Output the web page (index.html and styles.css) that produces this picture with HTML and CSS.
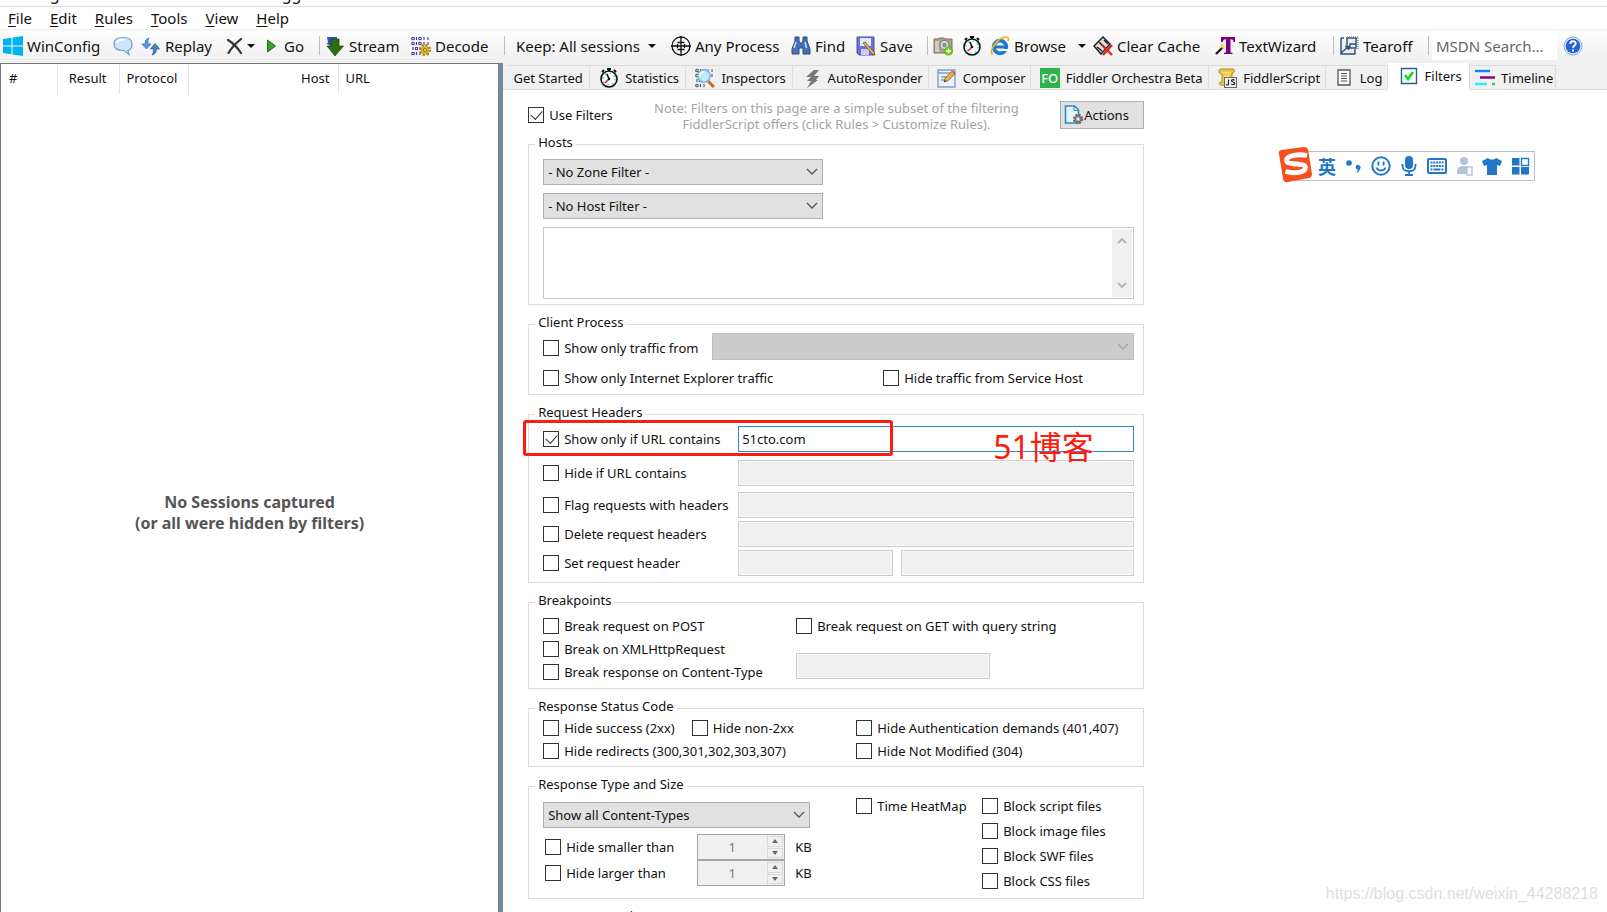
FILE: index.html
```html
<!DOCTYPE html>
<html lang="en">
<head>
<meta charset="utf-8">
<title>Progress Telerik Fiddler Web Debugger</title>
<link rel="stylesheet" href="styles.css">
</head>
<body>
<svg class="defs" aria-hidden="true">
  <symbol id="stopwatch" viewBox="0 0 20 20">
    <path d="M8 1h4M10 1v2M3 4l2-2M17 4l-2-2" stroke="#111" stroke-width="2" fill="none"/>
    <circle cx="10" cy="11" r="8" fill="#fff" stroke="#111" stroke-width="1.6"/>
    <circle cx="10" cy="11" r="6" fill="none" stroke="#3fd6e6" stroke-width="1.6" stroke-dasharray="1.6 3.1"/>
    <path d="M10 11L8 6" stroke="#111" stroke-width="1.6"/><path d="M10 11l-4 4" stroke="#e2231a" stroke-width="1.6"/>
    <circle cx="10" cy="11" r="1.3" fill="#111"/>
  </symbol>
  <symbol id="bits" viewBox="0 0 20 20">
    <g fill="none" stroke-width="1.1"><circle cx="2" cy="2.500" r="1.300"/><path d="M5.500 1v3M13 1v3"/><circle cx="9" cy="2.500" r="1.300"/><path d="M17 1v3"/>
    <circle cx="2" cy="7.500" r="1.300"/><path d="M5.500 6v3M13 6v3"/><circle cx="9" cy="7.500" r="1.300"/><path d="M17 6v3"/>
    <path d="M2 11v3"/><circle cx="5.500" cy="12.500" r="1.300"/><path d="M9 11v3"/>
    <circle cx="2" cy="17.500" r="1.300"/><path d="M5.500 16v3M9 16v3M17 16v3"/></g>
  </symbol>
  <symbol id="pencil" viewBox="0 0 12 12">
    <path d="M1 11l1-3.500L8.500 1 11 3.500 4.500 10z" fill="#e9b53c" stroke="#8a5a2a" stroke-width=".8"/><path d="M8 1.500L9.200.5l2.300 2.300-1 1.200z" fill="#d9574a"/><path d="M1 11l.6-2 1.400 1.400z" fill="#333"/>
  </symbol>
</svg>

<header class="titlebar">Progress Telerik Fiddler Web Debugger</header>
<nav class="menubar" aria-label="Main menu">
  <button><u>F</u>ile</button><button><u>E</u>dit</button><button><u>R</u>ules</button><button><u>T</u>ools</button><button><u>V</u>iew</button><button><u>H</u>elp</button>
</nav>

<div class="toolbar" role="toolbar" aria-label="Toolbar">
  <button><svg class="icon" viewBox="0 0 20 20"><path fill="#00b3f0" d="M0 3l8.500-1.300v7.800H0zM9.500 1.500L20 0v9.500H9.500zM0 10.500h8.500v7.800L0 17zM9.500 10.500H20V20L9.500 18.500z"/></svg>WinConfig</button>
  <button aria-label="Comment"><svg class="icon" viewBox="0 0 20 20"><path d="M10 1.500c5.500 0 9 2 9 6.500 0 4-1.500 6-4 6.500l1 4-5-4C4 14.500 1 12.500 1 8s3.500-6.500 9-6.500z" fill="#cfe6fa" stroke="#6d9ed2" stroke-width="1.200"/><path d="M4 7c.5-3 3-3.500 7-3.500" stroke="#fff" stroke-width="2" fill="none"/></svg></button>
  <button><svg class="icon" viewBox="0 0 20 20"><path d="M8 2C4.500 3 4 5 4.300 8H1l4.500 5L10 8H7c-.2-3 0-4 1-6z" fill="#5b9ae0" stroke="#2a6cb8" stroke-width=".7"/><path d="M11 19c3.500-1 4.500-3 4.200-6H18.500L14 7.500 9.500 13h3c.2 3-.5 4-1.500 6z" fill="#4a83c8" stroke="#1f5799" stroke-width=".7"/></svg>Replay</button>
  <button aria-label="Remove"><svg class="icon icon-s" viewBox="0 0 16 16"><path d="M1 2c5 3 9 7 13 13M14 1C9 5 5 9 1.500 15" stroke="#333" stroke-width="2.200" fill="none" stroke-linecap="round"/></svg><i class="caret"></i></button>
  <button><svg class="icon icon-go" viewBox="0 0 14 16"><path d="M1.500 2l8 6-8 6z" fill="#37a02f" stroke="#1d6f1b"/></svg>Go</button>
  <span class="sep"></span>
  <button><svg class="icon" viewBox="0 0 20 20"><path d="M2 1h10v7l-4 4-7-5h2z" fill="#2a55cf"/><path d="M6 3h8v7h4.500L10 20 2 10h4z" fill="#2f6b13" stroke="#1b4a0a" stroke-width=".7"/></svg>Stream</button>
  <button><svg class="icon" viewBox="0 0 20 20"><use href="#bits" stroke="#3a3aa0"/><circle cx="14" cy="14" r="4.600" fill="#d8b42a"/><circle cx="14" cy="14" r="5" fill="none" stroke="#a8820f" stroke-width="2.200" stroke-dasharray="2 1.920"/><circle cx="14" cy="14" r="1.500" fill="#fff3b0" stroke="#8a6a08"/></svg>Decode</button>
  <span class="sep"></span>
  <button>Keep: All sessions<i class="caret caret-keep"></i></button>
  <button><svg class="icon" viewBox="0 0 20 20"><g fill="none" stroke="#111" stroke-width="1.300"><circle cx="10" cy="10" r="9"/><path d="M10 0v20M0 10h20M6.500 6.500h7M6.500 13.500h7M6.500 8v4M13.500 8v4"/></g></svg>Any Process</button>
  <button><svg class="icon" viewBox="0 0 20 20"><path d="M4 1h4v4l1 2h2l1-2V1h4v4l3 8v5h-7v-6H8v6H1v-5l3-8z" fill="#4a6fb5" stroke="#294a86"/><path d="M5 6l-2 6M14 6l1.500 6" stroke="#cfdff5" stroke-width="1.500"/></svg>Find</button>
  <button><svg class="icon" viewBox="0 0 20 20"><path d="M1 1h17v18H3l-2-2z" fill="#6a72d8" stroke="#4a4fae"/><path d="M4 2h11v8H4z" fill="#e4ecfb"/><path d="M5 13h8v6H5z" fill="#c9cdf0"/><path d="M7 7l2-1 9 10 1 3-3-1z" fill="#e5b653" stroke="#6b4b1d" stroke-width=".8"/></svg>Save</button>
  <span class="sep"></span>
  <button aria-label="Screenshot"><svg class="icon" viewBox="0 0 20 20"><path d="M1 3h4l1-1h5l1 1h7v14H1z" fill="#aaa08c" stroke="#7c745f"/><path d="M2 5h4v11H2z" fill="#d2cbb9"/><circle cx="11.500" cy="9" r="4.500" fill="#ddd" stroke="#777"/><circle cx="11.500" cy="9" r="2.200" fill="#7f8ea6"/><circle cx="15.500" cy="15" r="4.500" fill="#6cbf1d"/><path d="M15.500 12.500v5M13 15h5" stroke="#fff" stroke-width="1.500"/></svg></button>
  <button aria-label="Timer"><svg class="icon"><use href="#stopwatch"/></svg></button>
  <button><svg class="icon" viewBox="0 0 20 20"><circle cx="10" cy="11" r="6.300" fill="none" stroke="#1d79d0" stroke-width="3.800"/><path d="M5 11h13" stroke="#1d79d0" stroke-width="3"/><path d="M12 13h7v2h-7z" fill="#fbfbfb"/><path d="M2.500 18.500C-1 15 7 2 15.500 1.200c3-.2 3.500 2 2.500 4" fill="none" stroke="#f0b429" stroke-width="1.800"/></svg>Browse<i class="caret caret-browse"></i></button>
  <button><svg class="icon" viewBox="0 0 20 20"><path d="M1 10L10 1l7 7-9 10z" fill="#ddd" stroke="#222" stroke-width="1.500"/><path d="M6 6l6 6M4 11l5 4M11 4l4 4" stroke="#222" stroke-width="1.600"/><path d="M9 9l10 10M19 9L10 19" stroke="#d8281c" stroke-width="2.400"/></svg>Clear Cache</button>
  <button><svg class="icon" viewBox="0 0 20 20"><path d="M6 1h14v5h-1.500c0-2-1-2.800-3-2.800V15c0 1.500.5 1.800 2 1.800V18H9v-1.200c1.500 0 2-.3 2-1.800V3.200c-2 0-3 .8-3.200 2.800H6z" fill="#800080"/><path d="M1 18l7-7" stroke="#222" stroke-width="2.400"/><path d="M6 9l3 3" stroke="#f3e135" stroke-width="3"/></svg>TextWizard</button>
  <span class="sep"></span>
  <button><svg class="icon" viewBox="0 0 20 20"><g fill="none" stroke="#38536f" stroke-width="1.500"><path d="M2 2v16h14v-5M2 2h3M8 2h9v10H8z" fill="#e8eef6"/><path d="M8 1h11v12" stroke-dasharray="1 1" stroke="#7d8ea0"/><path d="M2 17l7-6M6 10.500h3.500V14M11 12V8h6"/></g></svg>Tearoff</button>
  <span class="sep"></span>
  <input class="search" type="text" placeholder="MSDN Search..." aria-label="MSDN Search">
  <button aria-label="Help"><svg class="icon" viewBox="0 0 20 20"><circle cx="10" cy="10" r="9" fill="#dce9fb" stroke="#8aa9da"/><circle cx="10" cy="10" r="7.300" fill="#2a62cf"/><path d="M7.300 8c0-3.600 5.400-3.500 5.400-.4 0 2-2.700 2-2.700 4.200M10 13.500v2" stroke="#fff" stroke-width="1.900" fill="none"/></svg></button>
</div>

<main class="workspace">
  <section class="sessions" aria-label="Sessions">
    <table class="session-list">
      <thead><tr><th class="c-num">#</th><th class="c-result">Result</th><th class="c-protocol">Protocol</th><th class="c-host">Host</th><th class="c-url">URL</th></tr></thead>
    </table>
    <p class="empty">No Sessions captured<br>(or all were hidden by filters)</p>
  </section>

  <section class="detail">
    <div class="tabs" role="tablist">
      <button role="tab">Get Started</button>
      <button role="tab"><svg class="icon"><use href="#stopwatch"/></svg>Statistics</button>
      <button role="tab"><svg class="icon" viewBox="0 0 20 20"><use href="#bits" stroke="#555"/><path d="M13 13l6 6" stroke="#c46f23" stroke-width="3"/><circle cx="9" cy="8" r="6.200" fill="#bfe6fb" stroke="#7cb6dd" stroke-width="1.500"/><path d="M5 8c0-3 2-4 4-4" stroke="#fff" stroke-width="1.800" fill="none"/></svg>Inspectors</button>
      <button role="tab"><svg class="icon" viewBox="0 0 20 20"><path d="M12 2h5l-5 6h5l-3 4h2L5 20l4-7H5l4-4H4z" fill="#777"/></svg>AutoResponder</button>
      <button role="tab"><svg class="icon" viewBox="0 0 20 20"><path d="M1 2h17v17H1z" fill="#eaf2fb" stroke="#7da0c8" stroke-width="1.400"/><path d="M1 5h17M4 9h6M4 12h4" stroke="#7da0c8" stroke-width="1.400"/><use href="#pencil" x="6" y="2" width="13" height="13"/></svg>Composer</button>
      <button role="tab"><span class="fo" aria-hidden="true">FO</span>Fiddler Orchestra Beta</button>
      <button role="tab"><svg class="icon" viewBox="0 0 20 20"><path d="M4 1h12c2 0 2 4-1 4v6H8v5c-1 2-5 2-6-1l3-1V6C1 6 1 1 4 1z" fill="#e9c648" stroke="#b08c1c"/><path d="M5 5h9M7 8h6" stroke="#fff1a8"/><rect x="7.500" y="9.500" width="12" height="10" fill="#f4f4f4" stroke="#666"/><path d="M11.500 11.500v4.500c0 1.300-2 1.300-2.200 0M17.500 12.500c-.5-1.200-3-1-3 .3 0 1.600 3.200.8 3.200 2.600 0 1.500-3 1.500-3.400.2" fill="none" stroke="#222" stroke-width="1.200"/></svg>FiddlerScript</button>
      <button role="tab"><svg class="icon" viewBox="0 0 20 20"><path d="M4 2h12v15H4z" fill="#fafafa" stroke="#555" stroke-width="1.300"/><path d="M7 5.500h6M7 8h6M7 10.500h6M7 13h6" stroke="#555"/></svg>Log</button>
      <button role="tab" class="active" aria-selected="true"><svg class="icon" viewBox="0 0 20 20"><path d="M2.500 2.500h15v15h-15z" fill="#fff" stroke="#2c5b82" stroke-width="1.400"/><path d="M6 9l3 4 5-7" fill="none" stroke="#0be312" stroke-width="2.600"/></svg>Filters</button>
      <button role="tab"><svg class="icon" viewBox="0 0 20 20"><path d="M0 3h15" stroke="#0a84ff" stroke-width="2.400"/><path d="M5 9.500h15" stroke="#800080" stroke-width="2.400"/><path d="M0 16h12" stroke="#1cf0f0" stroke-width="2.400"/><path d="M17 16h3" stroke="#19e01f" stroke-width="2.400"/></svg>Timeline</button>
    </div>

    <form class="filters">
      <div class="intro">
        <label class="check"><input type="checkbox" checked>Use Filters</label>
        <p class="note">Note: Filters on this page are a simple subset of the filtering<br>FiddlerScript offers (click Rules &gt; Customize Rules).</p>
        <button type="button" class="actions"><svg class="icon" viewBox="0 0 20 20"><path d="M1.500 1h9l4 4v13h-13z" fill="#e6f4fc" stroke="#2a8cc4" stroke-width="1.600"/><path d="M10 1v4.500h4.500" fill="none" stroke="#2a8cc4"/><circle cx="14" cy="14" r="4" fill="#bbb" stroke="#666" stroke-width="2.400" stroke-dasharray="2 1.140"/><circle cx="14" cy="14" r="3" fill="#aaa" stroke="#666"/><circle cx="14" cy="14" r="1.200" fill="#eee"/></svg>Actions</button>
      </div>

      <fieldset class="hosts">
        <legend>Hosts</legend>
        <select aria-label="Zone filter"><option>- No Zone Filter -</option></select>
        <select aria-label="Host filter"><option>- No Host Filter -</option></select>
        <div class="hostbox"><textarea aria-label="Hosts"></textarea>
          <div class="scroll" aria-hidden="true"><svg viewBox="0 0 10 6"><path d="M1 5l4-4 4 4"/></svg><svg viewBox="0 0 10 6"><path d="M1 1l4 4 4-4"/></svg></div></div>
      </fieldset>

      <fieldset class="client">
        <legend>Client Process</legend>
        <div class="process"><label class="check"><input type="checkbox">Show only traffic from</label><select disabled aria-label="Process"></select></div>
        <div class="pair"><label class="check"><input type="checkbox">Show only Internet Explorer traffic</label><label class="check"><input type="checkbox">Hide traffic from Service Host</label></div>
      </fieldset>

      <fieldset class="request">
        <legend>Request Headers</legend>
        <div class="field roomy"><label class="check"><input type="checkbox" checked>Show only if URL contains</label><input class="text focus" type="text" value="51cto.com" aria-label="Show if URL contains"></div>
        <div class="field roomy"><label class="check"><input type="checkbox">Hide if URL contains</label><input class="text" type="text" disabled aria-label="Hide if URL contains"></div>
        <div class="field"><label class="check"><input type="checkbox">Flag requests with headers</label><input class="text" type="text" disabled aria-label="Flag headers"></div>
        <div class="field"><label class="check"><input type="checkbox">Delete request headers</label><input class="text" type="text" disabled aria-label="Delete headers"></div>
        <div class="field split"><label class="check"><input type="checkbox">Set request header</label><input class="text" type="text" disabled aria-label="Header name"><input class="text" type="text" disabled aria-label="Header value"></div>
        <span class="mark-box"></span>
        <span class="mark-text" lang="zh">51博客</span>
      </fieldset>

      <fieldset class="breakpoints">
        <legend>Breakpoints</legend>
        <div class="stack"><label class="check"><input type="checkbox">Break request on POST</label><label class="check"><input type="checkbox">Break on XMLHttpRequest</label><label class="check"><input type="checkbox">Break response on Content-Type</label></div>
        <div class="stack spread"><label class="check"><input type="checkbox">Break request on GET with query string</label><input class="text" type="text" disabled aria-label="Content type"></div>
      </fieldset>

      <fieldset class="status">
        <legend>Response Status Code</legend>
        <div class="stack"><div class="twins"><label class="check"><input type="checkbox">Hide success (2xx)</label><label class="check"><input type="checkbox">Hide non-2xx</label></div><label class="check"><input type="checkbox">Hide redirects (300,301,302,303,307)</label></div>
        <div class="stack"><label class="check"><input type="checkbox">Hide Authentication demands (401,407)</label><label class="check"><input type="checkbox">Hide Not Modified (304)</label></div>
      </fieldset>

      <fieldset class="types">
        <legend>Response Type and Size</legend>
        <div class="sizes">
          <select aria-label="Content types"><option>Show all Content-Types</option></select>
          <div class="size"><label class="check"><input type="checkbox">Hide smaller than</label><span class="spin"><input type="text" value="1" disabled aria-label="Smaller than, KB"><span class="steps"><button type="button" disabled aria-label="Up"><i class="up"></i></button><button type="button" disabled aria-label="Down"><i class="down"></i></button></span></span><span>KB</span></div>
          <div class="size"><label class="check"><input type="checkbox">Hide larger than</label><span class="spin"><input type="text" value="1" disabled aria-label="Larger than, KB"><span class="steps"><button type="button" disabled aria-label="Up"><i class="up"></i></button><button type="button" disabled aria-label="Down"><i class="down"></i></button></span></span><span>KB</span></div>
        </div>
        <label class="check"><input type="checkbox">Time HeatMap</label>
        <div class="blocks"><label class="check"><input type="checkbox">Block script files</label><label class="check"><input type="checkbox">Block image files</label><label class="check"><input type="checkbox">Block SWF files</label><label class="check"><input type="checkbox">Block CSS files</label></div>
      </fieldset>

      <fieldset class="response">
        <legend>Response Headers</legend>
      </fieldset>
    </form>
  </section>
</main>

<div class="ime">
  <svg class="ime-logo" viewBox="0 0 36 36"><path d="M2 7q-1-3 2-4L27 0q3 0 4 2l4 25q0 3-3 4L11 35q-4 1-5-3z" fill="#f4511e"/><path d="M30 8.500C20 6.500 9 9 9.500 13.500c.5 5.500 19 1.500 19 7 0 5-11 6.500-20 4" fill="none" stroke="#fff" stroke-width="4.800"/></svg>
  <span class="ime-lang" lang="zh">英</span>
  <svg viewBox="0 0 20 20"><circle cx="5" cy="7" r="2.800"/><path d="M12 10a2.500 2.500 0 1 1 4 3c-.5 2-2 3.500-3.500 4 .8-1.500 1.300-2.500 1.200-3.600a2.500 2.500 0 0 1-1.700-3.400z"/></svg>
  <svg viewBox="0 0 20 20"><circle cx="10" cy="10" r="8.700" fill="none" stroke="#2176c9" stroke-width="2"/><path d="M6.500 5.500h1.800v4H6.500zM11.700 5.500h1.800v4h-1.800z"/><path d="M5.500 11.500c1.500 4 7.500 4 9 0" fill="none" stroke="#2176c9" stroke-width="1.800"/></svg>
  <svg viewBox="0 0 20 20"><rect x="6" y="0" width="8" height="13" rx="4"/><path d="M3.500 8v2c0 7 13 7 13 0V8M10 15v4M6 19h8" fill="none" stroke="#2176c9" stroke-width="1.800"/></svg>
  <svg viewBox="0 0 20 20"><path d="M2 3h16q1 0 1 1v12q0 1-1 1H2q-1 0-1-1V4q0-1 1-1z" fill="#fff" stroke="#2176c9" stroke-width="2"/><path d="M3.500 6.500h13M3.500 10h13" fill="none" stroke="#2176c9" stroke-width="2.200" stroke-dasharray="2 .8"/><path d="M3.500 13.500h2M6.500 13.500h7M14.500 13.500h2" stroke="#2176c9" stroke-width="2"/></svg>
  <svg class="muted" viewBox="0 0 20 20"><circle cx="9" cy="5" r="4"/><path d="M2 18c-1-7 3-8 7-8 3 0 5 0 6 3v5z"/><rect x="12" y="11" width="5" height="8" fill="#fff" stroke="#b4c3d9" stroke-width="1.400"/></svg>
  <svg viewBox="0 0 20 20"><path d="M6 2c2 2 6 2 8 0l6 3-2 5-3-1v10H5V9l-3 1-2-5z"/></svg>
  <svg viewBox="0 0 20 20"><rect x="2" y="2" width="7.500" height="7.500"/><rect x="11.500" y="2.500" width="7" height="7" fill="#fff" stroke="#2176c9" stroke-width="1.400"/><rect x="2" y="11" width="7.500" height="7.500"/><rect x="11" y="11" width="8" height="7.500"/></svg>
</div>
<span class="watermark">https://blog.csdn.net/weixin_44288218</span>
</body>
</html>
```
FILE: styles.css
```css
* { box-sizing: border-box; }
body {
  margin: 0;
  height: 100vh;
  display: flex;
  flex-direction: column;
  overflow: hidden;
  position: relative;
  background: #fff;
  color: #111;
  font: 13px/18px "Noto Sans", "Open Sans", sans-serif;
}
button, input, select, textarea { font: inherit; color: inherit; margin: 0; }
button { border: 0; padding: 0; background: none; white-space: nowrap; }
.defs { position: absolute; width: 0; height: 0; }
.icon { width: 20px; height: 20px; flex: none; }
.icon-s { width: 16px; height: 16px; }
.icon-go { width: 14px; height: 16px; }

.titlebar {
  flex: none;
  height: 7px;
  padding: 0 0 4px 24px;
  display: flex;
  align-items: flex-end;
  overflow: hidden;
  border-bottom: 1px solid #dcdcdc;
  font-size: 16px;
  line-height: 16px;
}
.menubar {
  flex: none;
  height: 22px;
  display: flex;
  align-items: center;
  gap: 18px;
  padding-left: 8px;
  font-size: 15px;
}
.menubar u { text-underline-offset: 2px; }

.toolbar {
  flex: none;
  height: 34px;
  display: grid;
  grid-template-columns: 110px 28px 86px 39px 53px 6px 86px 93px 12px 155px 120px 65px 71px 6px 29px 28px 103px 122px 118px 6px 89px 4px 131px auto;
  align-items: center;
  padding: 0 0 2px 3px;
  background: linear-gradient(#fdfdfd, #efefef);
  border-top: 1px solid #f0f0f0;
  font-size: 15px;
}
.toolbar button { display: flex; align-items: center; gap: 4px; }
.sep { width: 1px; height: 19px; background: #bdbdbd; }
.caret { border: 4px solid transparent; border-top-color: #111; border-bottom: 0; }
.caret-keep { margin-left: 4px; }
.caret-browse { margin-left: 8px; }
.search { width: 125px; height: 29px; border: 0; padding: 0 4px; background: #fff; }
.search::placeholder { color: #666; opacity: 1; }

.workspace { flex: 1; min-height: 0; display: flex; background: #fff; }
.sessions {
  width: 31%;
  flex: none;
  display: flex;
  flex-direction: column;
  border-top: 1px solid #777;
  border-left: 1px solid #777;
}
.session-list { width: 100%; table-layout: fixed; border-collapse: collapse; }
.session-list th {
  height: 30px;
  padding: 0 8px 2px;
  font-weight: 400;
  text-align: left;
  border-right: 1px solid #e3e3e3;
}
.session-list .c-num { width: 56px; }
.session-list .c-result { width: 62px; padding-right: 12px; text-align: right; }
.session-list .c-protocol { width: 69px; padding-left: 7px; }
.session-list .c-host { width: 150px; text-align: right; }
.session-list .c-url { border: 0; padding-left: 7px; }
.empty {
  flex: 1;
  display: grid;
  place-content: center;
  margin: 0;
  padding-top: 20px;
  text-align: center;
  color: #555;
  font-weight: 700;
  font-size: 16px;
  line-height: 21px;
}

.detail { flex: 1; min-width: 0; overflow: hidden; border-left: 5px solid #76879a; }
.tabs {
  height: 27px;
  padding: 2px 0 0 4px;
  display: grid;
  grid-template-columns: 83px 96px 107px 136px 102px 178px 117px 62px 82px 86px;
  background: #f0f0f0;
  border-bottom: 1px solid #dcdcdc;
}
.tabs button {
  display: flex;
  align-items: center;
  justify-content: center;
  gap: 6px;
  padding-left: 3px;
  border: 1px solid #dcdcdc;
  border-left: 0;
  border-bottom: 0;
}
.tabs button:first-child { padding-left: 0; }
.tabs .active { background: #fff; margin: -3px 0 -1px; padding-bottom: 1px; }
.fo { width: 20px; height: 20px; background: #2eb34a; color: #fff; line-height: 20px; font-weight: 500; }

.filters { padding: 10px 24px 0 25px; max-width: 665px; display: flex; flex-direction: column; gap: 10px; }
.intro { height: 35px; display: flex; justify-content: space-between; align-items: flex-start; margin-bottom: -10px; }
.intro .check { padding-top: 8px; height: 22px; }
.note { margin: 0; text-align: center; line-height: 16px; color: #a3a3a3; }
.actions {
  display: flex;
  align-items: center;
  height: 28px;
  width: 84px;
  margin-top: 1px;
  padding-left: 3px;
  background: #e1e1e1;
  border: 1px solid #adadad;
}

.check { display: flex; align-items: center; gap: 5px; height: 18px; white-space: nowrap; }
.check input {
  appearance: none;
  width: 16px;
  height: 16px;
  flex: none;
  display: grid;
  place-items: center;
  border: 1px solid #333;
  background: #fff;
}
.check input:checked::after {
  content: "";
  width: 6px;
  height: 10px;
  margin-bottom: 3px;
  border: solid #333;
  border-width: 0 1px 1px 0;
  transform: rotate(42deg);
}

fieldset { margin: 0; min-width: 0; border: 1px solid #dcdcdc; padding: 0 9px 0 14px; position: relative; }
legend { height: 18px; margin-left: -8px; padding: 0 3px; line-height: 15px; }
select {
  appearance: none;
  height: 26px;
  padding: 0 4px;
  border: 1px solid #adadad;
  border-radius: 0;
  background: #e1e1e1 url("data:image/svg+xml,%3Csvg xmlns='http://www.w3.org/2000/svg' width='12' height='8'%3E%3Cpath d='M1 1l5 5 5-5' fill='none' stroke='%23555' stroke-width='1.300'/%3E%3C/svg%3E") no-repeat right 4px center;
}
select:disabled {
  height: 27px;
  opacity: 1;
  border-color: #bfbfbf;
  background: #ccc url("data:image/svg+xml,%3Csvg xmlns='http://www.w3.org/2000/svg' width='12' height='8'%3E%3Cpath d='M1 1l5 5 5-5' fill='none' stroke='%23a5a5a5' stroke-width='1.300'/%3E%3C/svg%3E") no-repeat right 4px center;
}
.text { width: 100%; min-width: 0; height: 26px; padding: 0 3px; border: 1px solid #ccc; background: #fff; }
.text:disabled { background: #f0f0f0; box-shadow: inset 0 0 0 1px #f8f8f8; }
.text.focus { border-color: #2a8ad8; }

.hosts { padding-top: 6px; padding-bottom: 5px; }
.hosts select { display: block; width: 280px; margin-bottom: 8px; }
.hostbox { height: 72px; display: flex; padding: 1px; border: 1px solid #c8c8c8; }
.hostbox textarea { flex: 1; border: 0; padding: 2px; resize: none; }
.scroll { width: 20px; padding: 9px 5px; display: flex; flex-direction: column; justify-content: space-between; background: #f0f0f0; }
.scroll path { fill: none; stroke: #b5b5b5; stroke-width: 2; }

.client { padding-bottom: 7px; }
.process { display: flex; justify-content: space-between; margin-bottom: 9px; }
.process .check { margin-top: 6px; }
.process select { width: 422px; }
.pair { display: grid; grid-template-columns: 340px 1fr; }

.request { padding-top: 3px; padding-bottom: 6px; }
.field { display: grid; grid-template-columns: 195px 1fr; align-items: center; }
.field + .field { margin-top: 3px; }
.roomy + .field { margin-top: 6px; }
.roomy + .roomy { margin-top: 8px; }
.split { grid-template-columns: 195px 155px 1fr; }
.split .text:last-child { margin-left: 8px; width: auto; }
.mark-box { position: absolute; left: -6px; top: -3px; width: 370px; height: 36px; border: 3px solid #fb1d10; border-radius: 3px; pointer-events: none; }
.mark-text { position: absolute; left: 464px; top: 4px; color: #fb1d10; font: 32px/40px "Noto Sans", "Noto Sans CJK SC", sans-serif; }

.breakpoints { display: grid; grid-template-columns: 253px 1fr; padding-top: 6px; padding-bottom: 7px; }
.stack { display: flex; flex-direction: column; gap: 5px; }
.spread { gap: 18px; }
.spread .text { width: 194px; }

.status { display: grid; grid-template-columns: 313px 1fr; padding-top: 2px; padding-bottom: 6px; }
.twins { display: flex; gap: 17px; }

.types { display: grid; grid-template-columns: 313px 126px 1fr; padding-top: 2px; padding-bottom: 8px; }
.sizes { padding-top: 5px; }
.sizes select { width: 267px; display: block; margin-bottom: 6px; }
.size { display: grid; grid-template-columns: 152px 88px 1fr; align-items: center; padding-left: 2px; }
.size > span:last-child { padding-left: 10px; }
.spin { height: 26px; display: flex; border: 1px solid #a5a5a9; background: #f0f0f0; }
.spin input { flex: 1; min-width: 0; border: 0; padding: 0; text-align: center; background: none; color: #777; }
.steps { width: 18px; padding: 1px; display: grid; gap: 1px; }
.steps button { display: grid; place-items: center; border: 1px solid #d9d9d9; }
.up, .down { border: 3px solid transparent; }
.up { border-bottom: 4px solid #666; border-top: 0; }
.down { border-top: 4px solid #666; border-bottom: 0; }
.blocks { display: flex; flex-direction: column; gap: 7px; }
.response { height: 90px; flex: none; }

.ime { position: absolute; right: 72px; top: 151px; height: 30px; width: 244px; padding: 0 4px 0 25px; display: flex; align-items: center; justify-content: space-between; background: #fff; border: 1px solid #b9bcc6; border-left: 0; }
.ime svg { width: 20px; height: 20px; fill: #2176c9; flex: none; }
.ime .muted { fill: #b4c3d9; }
.ime .ime-logo { position: absolute; left: -14px; top: -5px; width: 36px; height: 36px; }
.ime-lang { padding-left: 2px; color: #2176c9; font: 700 18px/20px "Noto Sans CJK SC", sans-serif; }
.watermark { position: absolute; right: 9px; bottom: 8px; color: #dedede; font: 16px/20px "Liberation Sans", Arial, sans-serif; }
```
